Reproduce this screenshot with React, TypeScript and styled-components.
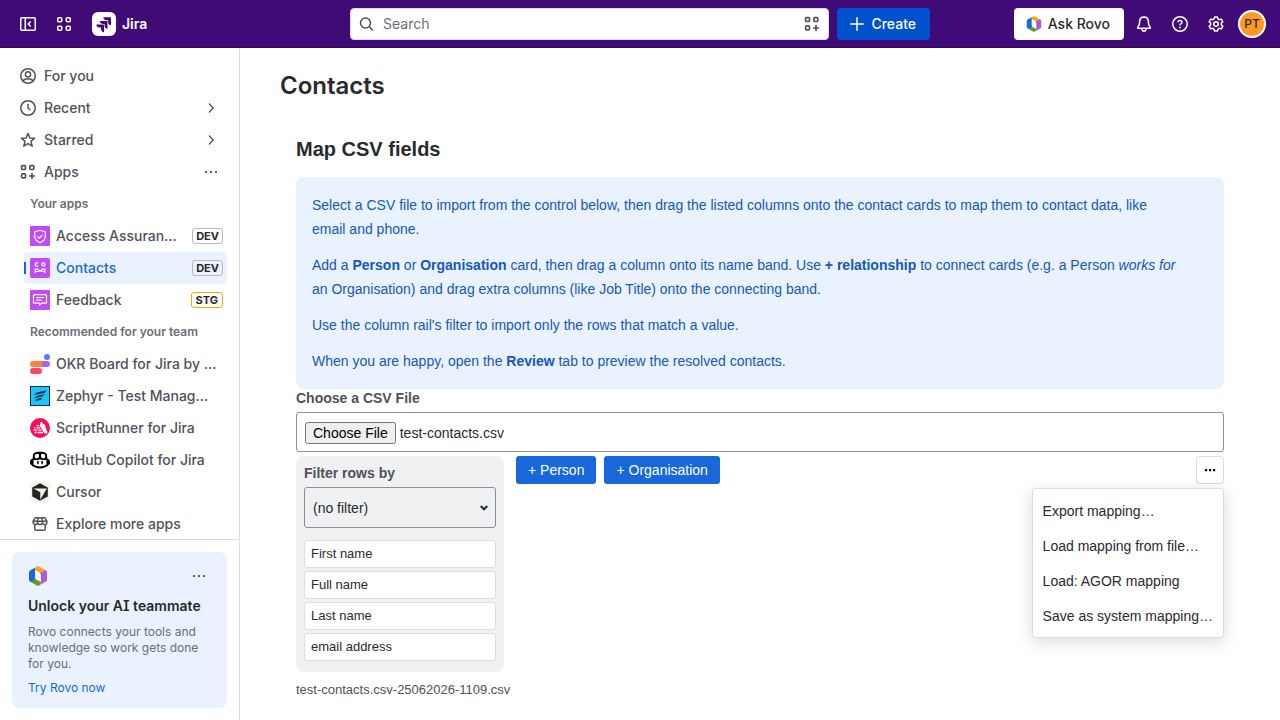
import React, { useEffect, useRef } from "react";
import styled, { createGlobalStyle } from "styled-components";

const ui = `Inter, "Noto Sans", sans-serif`;
const frame = `"Liberation Sans", Arial, sans-serif`;

const GlobalStyle = createGlobalStyle`
  *, *::before, *::after { box-sizing: border-box; }
  body { margin: 0; background: #fff; color: #292a2e; font: 400 14px/20px ${ui}; }
  h1, h2, h3, p, ul { margin: 0; padding: 0; }
  ul { list-style: none; }
  a { color: inherit; text-decoration: none; }
  button, input, select { font: inherit; color: inherit; margin: 0; }
  button { border: 0; padding: 0; background: none; cursor: pointer; }
  svg { display: block; flex: none; }
`;

const Page = styled.div`
  display: flex;
  flex-direction: column;
  height: 100vh;
`;

const Header = styled.header`
  display: grid;
  grid-template-columns: 1fr minmax(320px, 580px) 1fr;
  align-items: center;
  height: 48px;
  flex: none;
  padding: 0 12px;
  background: #400b76;
  border-bottom: 1px solid #35075f;
  color: #fff;
`;

const HeaderGroup = styled.div<{ $end?: boolean }>`
  display: flex;
  align-items: center;
  gap: 4px;
  justify-content: ${(p) => (p.$end ? "flex-end" : "flex-start")};
`;

const IconButton = styled.button`
  display: grid;
  place-items: center;
  width: 32px;
  height: 32px;
  border-radius: 4px;
`;

const Brand = styled.a`
  display: flex;
  align-items: center;
  gap: 6px;
  padding-left: 8px;
  font-weight: 600;
`;

const SearchGroup = styled.div`
  display: flex;
  gap: 8px;
`;

const SearchBox = styled.label`
  display: flex;
  align-items: center;
  flex: 1;
  min-width: 0;
  height: 32px;
  padding: 0 8px;
  gap: 8px;
  background: #fff;
  border: 1px solid #dddee1;
  border-radius: 4px;
  color: #505258;
`;

const SearchInput = styled.input`
  flex: 1;
  min-width: 0;
  border: 0;
  padding: 0;
  outline: 0;
  background: transparent;
  &::placeholder { color: #6b6e76; opacity: 1; }
`;

const CreateButton = styled.button`
  display: flex;
  align-items: center;
  gap: 6px;
  height: 32px;
  padding: 0 14px 0 12px;
  border-radius: 4px;
  background: #0052cc;
  color: #fff;
  font-weight: 500;
`;

const RovoButton = styled(CreateButton)`
  background: #fff;
  color: #292a2e;
`;

const Avatar = styled.span`
  display: grid;
  place-items: center;
  width: 28px;
  height: 28px;
  border: 2px solid #fff;
  border-radius: 50%;
  background: #ff991f;
  color: #292a2e;
  font-size: 12px;
  font-weight: 500;
`;

const Body = styled.div`
  display: flex;
  flex: 1;
  min-height: 0;
`;

const Sidebar = styled.aside`
  display: flex;
  flex-direction: column;
  flex: none;
  width: 240px;
  border-right: 1px solid #dddee1;
`;

const Nav = styled.nav`
  flex: 1;
  min-height: 0;
  overflow: hidden;
  padding: 12px;
`;

const AppList = styled.div`
  padding-left: 12px;
`;

const NavLink = styled.a<{ $nested?: boolean; $active?: boolean }>`
  position: relative;
  display: flex;
  align-items: center;
  gap: ${(p) => (p.$nested ? 6 : 8)}px;
  height: 32px;
  padding: 0 ${(p) => (p.$nested ? "4px 0 6px" : "8px")};
  border-radius: 4px;
  font-weight: 500;
  color: ${(p) => (p.$active ? "#1868db" : "#505258")};
  background: ${(p) => (p.$active ? "#e9f2fe" : "transparent")};
  &::before {
    content: "";
    display: ${(p) => (p.$active ? "block" : "none")};
    position: absolute;
    left: 0;
    top: 10px;
    width: 2px;
    height: 12px;
    background: #1868db;
  }
`;

const NavText = styled.span`
  flex: 1;
  min-width: 0;
  overflow: hidden;
  text-overflow: ellipsis;
  white-space: nowrap;
`;

const NavHeading = styled.h3`
  padding: 0 6px;
  font-size: 12px;
  line-height: 32px;
  font-weight: 600;
  color: #6b6e76;
`;

const Tag = styled.span<{ $amber?: boolean }>`
  margin-left: 4px;
  padding: 0 ${(p) => (p.$amber ? 4 : 3)}px;
  border: 1px solid ${(p) => (p.$amber ? "#fca700" : "#b7b9be")};
  border-radius: 3px;
  background: ${(p) => (p.$amber ? "#fff" : "transparent")};
  color: #292a2e;
  font-size: 11px;
  line-height: 14px;
  font-weight: 700;
`;

const SidebarFooter = styled.div`
  padding: 12px;
  border-top: 1px solid #dddee1;
`;

const Promo = styled.section`
  padding: 12px 16px;
  border-radius: 8px;
  background: #e9f2fe;
  font-size: 12px;
  line-height: 16px;
  color: #6b6e76;
`;

const PromoTop = styled.div`
  display: flex;
  align-items: center;
  justify-content: space-between;
  height: 24px;
`;

const PromoTitle = styled.h3`
  margin: 8px 0;
  font-size: 14px;
  line-height: 20px;
  font-weight: 600;
  font-feature-settings: "cv08";
  white-space: nowrap;
  color: #292a2e;
`;

const PromoLink = styled.a`
  display: block;
  margin-top: 8px;
  color: #1868db;
`;

const MoreButton = styled.button`
  display: grid;
  place-items: center;
  width: 24px;
  height: 24px;
  color: #505258;
`;

const Main = styled.main`
  flex: 1;
  min-width: 0;
  padding: 24px 40px 0;
`;

const PageTitle = styled.h1`
  font-size: 24px;
  line-height: 28px;
  font-weight: 600;
`;

const Frame = styled.section`
  margin-top: 37px;
  padding: 0 16px;
  font-family: ${frame};
`;

const FrameTitle = styled.h2`
  font-size: 20px;
  line-height: 24px;
  font-weight: 700;
`;

const Help = styled.div`
  display: grid;
  gap: 12px;
  margin-top: 16px;
  padding: 16px;
  border-radius: 8px;
  background: #e9f2fe;
  color: #1558bc;
  font-size: 14px;
  line-height: 24px;
  & > p { max-width: 868px; }
`;

const FieldLabel = styled.label`
  display: block;
  font-size: 14px;
  line-height: 19px;
  font-weight: 700;
  color: #505258;
`;

const FileInput = styled.input`
  display: block;
  width: 100%;
  height: 40px;
  margin-top: 4px;
  padding: 9px 8px 7px;
  border: 1px solid #8c8f97;
  border-radius: 3px;
  font-size: 14px;
`;

const Workspace = styled.div`
  display: flex;
  align-items: flex-start;
  gap: 12px;
  margin-top: 4px;
`;

const Rail = styled.div`
  flex: none;
  width: 208px;
  padding: 8px 8px 11px;
  border-radius: 8px;
  background: #f0f1f2;
`;

const SelectWrap = styled.div`
  display: grid;
  align-items: center;
  margin: 4px 0 12px;
  & > * { grid-area: 1 / 1; }
  & > svg { justify-self: end; margin-right: 8px; pointer-events: none; }
`;

const Select = styled.select`
  appearance: none;
  width: 100%;
  height: 41px;
  padding: 0 8px;
  border: 1px solid #8c8f97;
  border-radius: 3px;
  background: #f0f1f2;
  font-size: 14px;
`;

const ColumnList = styled.ul`
  display: grid;
  gap: 3px;
`;

const ColumnItem = styled.li`
  height: 28px;
  padding: 0 6px;
  border: 1px solid #dddee1;
  border-radius: 3px;
  background: #fff;
  font-size: 13px;
  line-height: 26px;
  cursor: grab;
`;

const Toolbar = styled.div`
  display: flex;
  flex: 1;
  gap: 8px;
`;

const AddButton = styled.button`
  height: 28px;
  padding: 0 12px;
  border-radius: 3px;
  background: #1868db;
  color: #fff;
  font-size: 14px;
`;

const MenuAnchor = styled.div`
  position: relative;
  margin-left: auto;
`;

const MenuButton = styled.button`
  display: grid;
  place-items: center;
  width: 28px;
  height: 28px;
  border: 1px solid #dddee1;
  border-radius: 3px;
  color: #000;
`;

const Menu = styled.div`
  position: absolute;
  top: 100%;
  right: 0;
  display: grid;
  margin-top: 4px;
  padding: 4px 0;
  border: 1px solid #dddee1;
  border-radius: 3px;
  background: #fff;
  box-shadow: 0 4px 16px rgba(0, 0, 0, 0.15);
`;

const MenuItem = styled.button`
  height: 35px;
  padding: 0 10px;
  font-size: 14px;
  text-align: left;
  white-space: nowrap;
`;

const FileName = styled.p`
  margin-top: 8px;
  font-size: 13px;
  line-height: 20px;
  color: #505258;
`;

type IconProps = { children: React.ReactNode; size?: number; box?: string };

const Icon = ({ children, size = 16, box = "0 0 16 16" }: IconProps) => (
  <svg width={size} height={size} viewBox={box} fill="none" stroke="currentColor" strokeWidth="1.5" aria-hidden="true">
    {children}
  </svg>
);

const AppsGlyph = () => (
  <Icon>
    <g strokeWidth="1.7">
      <rect x="1.6" y="1.6" width="3.900" height="3.900" rx="1" />
      <rect x="9.900" y="1.6" width="3.900" height="3.900" rx="1" />
      <rect x="1.6" y="9.900" width="3.900" height="3.900" rx="1" />
      <path d="M12 9V15M9 12H15" />
    </g>
  </Icon>
);

const MoreGlyph = () => (
  <Icon>
    <g fill="currentColor" stroke="none">
      <rect x="2" y="7" width="2" height="2" rx=".5" />
      <rect x="7" y="7" width="2" height="2" rx=".5" />
      <rect x="12" y="7" width="2" height="2" rx=".5" />
    </g>
  </Icon>
);

const Chevron = () => (
  <Icon>
    <path d="M6 3.500 10.200 8 6 12.500" strokeWidth="1.300" />
  </Icon>
);

const RovoLogo = ({ size }: { size: number }) => (
  <svg width={size} height={size} viewBox="0 0 20 20" aria-hidden="true">
    <path d="M1 6.200Q1 5 2 4.400L7.300 1.500V11.500Q7.300 13 8.200 14L4.200 16.600 2 15.500Q1 14.900 1 13.800Z" fill="#1868db" />
    <path d="M16.800 3.800 18 4.500Q19 5.100 19 6.300V13.800Q19 15 18 15.600L12.700 18.500V10Q12.700 7.500 11.200 6L14 6Z" fill="#af59e1" />
    <path d="M7.300 3.500 11.500 6Q12.700 7.500 12.700 9.500V16.500L8.500 14.200Q7.300 13 7.300 11.500Z" fill="#fff" />
    <path d="M7.300 1.500 8.800.600Q10 0 11.200.600L16.800 3.800Q15 6.400 12.800 6.400 11.200 6.400 7.300 4.200Z" fill="#fca700" />
    <path d="M3.200 16.200Q5 13.600 7.200 13.600 8.800 13.600 12.700 15.800V18.500L11.200 19.400Q10 20 8.800 19.400Z" fill="#6a9a23" />
  </svg>
);

const Tile = ({ children, fill, rx = 1 }: { children: React.ReactNode; fill: string; rx?: number }) => (
  <svg width="20" height="20" viewBox="0 0 20 20" fill="none" aria-hidden="true">
    <rect width="20" height="20" rx={rx} fill={fill} />
    {children}
  </svg>
);

const icons = {
  person: (
    <Icon>
      <circle cx="8" cy="8" r="7.250" />
      <circle cx="8" cy="6.300" r="2.600" />
      <path d="M3.200 13.200Q3.800 10.900 6 10.900H10Q12.200 10.900 12.800 13.200" />
    </Icon>
  ),
  clock: (
    <Icon>
      <circle cx="8" cy="8" r="7.250" />
      <path d="M8 4V8L10.300 10.300" />
    </Icon>
  ),
  star: (
    <Icon>
      <path d="M8 1.500 9.900 6 14.600 6.300 11 9.400 12.200 14.200 8 11.600 3.800 14.200 5 9.400 1.400 6.300 6.100 6Z" strokeLinejoin="round" />
    </Icon>
  ),
  shield: (
    <Tile fill="#bf4bf5">
      <path d="M10 4.200 15.300 6V10.200Q15.300 14.500 10 16.800 4.700 14.500 4.700 10.200V6Z" stroke="#fff" strokeWidth="1.200" strokeLinejoin="round" />
      <path d="M7.600 10.500 9.300 12.200 12.500 8.800" stroke="#fff" strokeWidth="1.200" />
    </Tile>
  ),
  contacts: (
    <Tile fill="#bf4bf5" rx={2}>
      <g stroke="#fff" strokeWidth="1.200">
        <path d="M8.200 5.200A1.700 1.700 0 1 0 8.200 7.600" />
        <circle cx="13.400" cy="6.400" r="1.600" />
        <path d="M5.200 15V11.200H7.300L10 13.300 12.800 11.200H14.900V15M8.700 13.500H5.500M11.400 13.500H14.800" />
      </g>
    </Tile>
  ),
  feedback: (
    <Tile fill="#bf4bf5">
      <g stroke="#fff" strokeWidth="1.200" strokeLinejoin="round">
        <path d="M4.500 4.600H15.500Q16.500 4.600 16.500 5.600V12.200Q16.500 13.200 15.500 13.200H11.600L9.600 15.200V13.200H4.500Q3.500 13.200 3.500 12.200V5.600Q3.500 4.600 4.500 4.600Z" />
        <path d="M6 7.500H14M6 10.200H11.700" />
      </g>
    </Tile>
  ),
  okr: (
    <svg width="20" height="20" viewBox="0 0 20 20" aria-hidden="true">
      <circle cx="17" cy="3" r="3" fill="#577df5" />
      <rect x="7" y="7" width="13" height="6" rx="3" fill="#a962f5" />
      <path d="M3 7H12.500L11.500 13H3A3 3 0 0 1 3 7Z" fill="#fd8043" />
      <rect y="14" width="12" height="6" rx="3" fill="#fc4664" />
    </svg>
  ),
  zephyr: (
    <Tile fill="#15304c" rx={0}>
      <rect x="1" y="1" width="18" height="18" fill="#19c6fb" />
      <path d="M16.500 4Q15.500 7.500 11.500 7.600L4 9.200Q6.500 5.900 11 5.500 14.500 5.200 16.500 4ZM14.500 7.800Q13.500 10.900 10 11L4 12.400Q6 9.500 9.500 9.200 13 9 14.500 7.800ZM12.500 11.400Q11.500 14 8.800 14.300L4.500 15.500Q6 13 8.500 12.600 11 12.300 12.500 11.400Z" fill="#15304c" />
    </Tile>
  ),
  scriptrunner: (
    <Tile fill="#ff0a5b" rx={10}>
      <path d="M10.300 4.500Q11.300 2.900 12.300 4.300 12.500 6.300 14.800 6.200L16 11 17.700 14.300 16.500 15.700 14.500 15.300 10 8.600Z" fill="#fff" />
      <path d="M6.500 7.600H9.300M4 9.900H5.500M6.500 9.900H10M3.400 12.200H7.300M8.300 12.200H11.500M4.600 14.500H6.500M7.500 14.500H13" stroke="#fff" strokeWidth="1.300" />
    </Tile>
  ),
  copilot: (
    <svg width="20" height="20" viewBox="0 0 20 20" aria-hidden="true">
      <path d="M10 1.800Q16.900 1.400 17.200 5.600V8.200Q20 9.900 20 11.200V13.700Q16 18.400 10 18.400T0 13.700V11.200Q0 9.900 2.800 8.200V5.600Q3.100 1.400 10 1.800Z" fill="#000" />
      <path d="M4.700 6Q4.800 3.800 7.500 3.800 9.200 3.800 9.100 5.500 9 8.300 6.700 8.400 4.500 8.500 4.700 6ZM15.300 6Q15.200 3.800 12.500 3.800 10.800 3.800 10.900 5.500 11 8.300 13.300 8.400 15.500 8.500 15.300 6ZM3.600 10H8.500L10 9 11.500 10H16.400V14.800Q10 18 3.600 14.800Z" fill="#fff" />
      <path d="M7.900 11.600V13.600M12.100 11.600V13.600" stroke="#000" strokeWidth="1.500" strokeLinecap="round" />
    </svg>
  ),
  cursor: (
    <Tile fill="#f4f3ee" rx={0}>
      <path d="M10 1.200 17.800 5.600V14.400L10 18.800 2.200 14.400V5.600Z" fill="#26251f" />
      <path d="M3.500 6.500H16.800L10.300 17.700V10.300Z" fill="#f4f3ee" />
    </Tile>
  ),
  store: (
    <Icon size={20} box="-2 -2 20 20">
      <path d="M3.200 1.750H12.800L14.900 5.200V6.200A2.200 2.200 0 0 1 10.400 6.200 2.300 2.300 0 0 1 5.600 6.200 2.200 2.200 0 0 1 1.100 6.200V5.200ZM1.500 5.200H14.500M5.600 6.200V4.700L6.200 2M10.400 6.200V4.700L9.800 2M2.750 8.500V13Q2.750 14.250 4 14.250H12Q13.250 14.250 13.250 13V8.500" strokeWidth="1.500" />
    </Icon>
  ),
};

const yourApps = [
  { name: "Access Assuran…", icon: icons.shield, tag: "DEV" },
  { name: "Contacts", icon: icons.contacts, tag: "DEV", active: true },
  { name: "Feedback", icon: icons.feedback, tag: "STG" },
];

const recommended = [
  { name: "OKR Board for Jira by …", icon: icons.okr },
  { name: "Zephyr - Test Manag…", icon: icons.zephyr },
  { name: "ScriptRunner for Jira", icon: icons.scriptrunner },
  { name: "GitHub Copilot for Jira", icon: icons.copilot },
  { name: "Cursor", icon: icons.cursor },
  { name: "Explore more apps", icon: icons.store },
];

const columns = ["First name", "Full name", "Last name", "email address"];
const menuItems = ["Export mapping…", "Load mapping from file…", "Load: AGOR mapping", "Save as system mapping…"];

const TopBar = () => (
  <Header>
    <HeaderGroup>
      <IconButton aria-label="Collapse sidebar">
        <Icon>
          <rect x=".75" y="1.75" width="14.500" height="12.500" rx="1.250" />
          <path d="M5.250 2V14M10.600 5.500 8.200 8 10.600 10.500" />
        </Icon>
      </IconButton>
      <IconButton aria-label="Switch sites or apps">
        <Icon>
          <rect x="1.75" y="1.75" width="4" height="4" rx="1" />
          <rect x="10.250" y="1.75" width="4" height="4" rx="1" />
          <rect x="1.75" y="10.250" width="4" height="4" rx="1" />
          <rect x="10.250" y="10.250" width="4" height="4" rx="1" />
        </Icon>
      </IconButton>
      <Brand href="#">
        <svg width="24" height="24" viewBox="0 0 24 24" aria-hidden="true">
          <rect width="24" height="24" rx="6" fill="#fff" />
          <path
            fill="#400b76"
            d="M9.051 15.434H7.734c-1.988 0-3.413-1.218-3.413-3h7.085c.367 0 .605.26.605.63v7.130c-1.772 0-2.960-1.435-2.960-3.434zm3.500-3.543h-1.318c-1.987 0-3.413-1.196-3.413-2.978h7.085c.367 0 .627.239.627.608v7.130c-1.772 0-2.981-1.435-2.981-3.434zm3.520-3.522h-1.317c-1.987 0-3.413-1.217-3.413-3h7.085c.367 0 .605.261.605.630v7.130c-1.772 0-2.960-1.435-2.960-3.434z"
          />
        </svg>
        Jira
      </Brand>
    </HeaderGroup>
    <SearchGroup>
      <SearchBox>
        <Icon>
          <circle cx="6.500" cy="7" r="5" />
          <path d="M10.200 10.700 14 14.500" />
        </Icon>
        <SearchInput type="search" placeholder="Search" aria-label="Search" />
        <AppsGlyph />
      </SearchBox>
      <CreateButton>
        <Icon>
          <path d="M8 1.200V14.800M1.200 8H14.800" />
        </Icon>
        Create
      </CreateButton>
    </SearchGroup>
    <HeaderGroup $end>
      <RovoButton>
        <RovoLogo size={16} />
        Ask Rovo
      </RovoButton>
      <IconButton aria-label="Notifications">
        <Icon>
          <path d="M8 .9Q12.100 1 12.300 5.200L12.700 8.700 14.300 11.500V12.200H1.700V11.500L3.300 8.700 3.700 5.200Q3.900 1 8 .9Z" strokeLinejoin="round" />
          <path d="M5.700 12.500Q6 15.200 8 15.200T10.300 12.500" />
        </Icon>
      </IconButton>
      <IconButton aria-label="Help">
        <Icon>
          <circle cx="8" cy="8" r="7.250" />
          <path d="M6 6.300Q6 4.500 8 4.500T10 6.200Q10 7.200 8.800 7.800 8 8.200 8 9.300" />
          <circle cx="8" cy="11.400" r=".9" fill="currentColor" stroke="none" />
        </Icon>
      </IconButton>
      <IconButton aria-label="Settings">
        <Icon>
          <path d="M6.600.9H9.400L9.900 2.900 11.200 3.700 13.200 3.100 14.800 5.600 13.300 7.100V8.900L14.800 10.400 13.200 12.900 11.200 12.300 9.900 13.100 9.400 15.100H6.600L6.100 13.100 4.800 12.300 2.800 12.900 1.200 10.400 2.700 8.900V7.100L1.200 5.600 2.800 3.100 4.800 3.700 6.100 2.900Z" strokeLinejoin="round" />
          <circle cx="8" cy="8" r="2.250" />
        </Icon>
      </IconButton>
      <IconButton aria-label="Your profile">
        <Avatar>PT</Avatar>
      </IconButton>
    </HeaderGroup>
  </Header>
);

function NavSection({ title, children }: { title: string; children: React.ReactNode }) {
  return (
    <AppList>
      <NavHeading>{title}</NavHeading>
      <ul>{children}</ul>
    </AppList>
  );
}

const SideNav = () => (
  <Sidebar>
    <Nav>
      <NavLink href="#">{icons.person}<NavText>For you</NavText></NavLink>
      <NavLink href="#">{icons.clock}<NavText>Recent</NavText><Chevron /></NavLink>
      <NavLink href="#">{icons.star}<NavText>Starred</NavText><Chevron /></NavLink>
      <NavLink href="#"><AppsGlyph /><NavText>Apps</NavText><MoreGlyph /></NavLink>
      <NavSection title="Your apps">
        {yourApps.map((a) => (
          <li key={a.name}>
            <NavLink href="#" $nested $active={a.active}>
              {a.icon}
              <NavText>{a.name}</NavText>
              <Tag $amber={a.tag === "STG"}>{a.tag}</Tag>
            </NavLink>
          </li>
        ))}
      </NavSection>
      <NavSection title="Recommended for your team">
        {recommended.map((a) => (
          <li key={a.name}>
            <NavLink href="#" $nested>
              {a.icon}
              <NavText>{a.name}</NavText>
            </NavLink>
          </li>
        ))}
      </NavSection>
    </Nav>
    <SidebarFooter>
      <Promo>
        <PromoTop>
          <RovoLogo size={20} />
          <MoreButton aria-label="More"><MoreGlyph /></MoreButton>
        </PromoTop>
        <PromoTitle>Unlock your AI teammate</PromoTitle>
        <p>Rovo connects your tools and knowledge so work gets done for you.</p>
        <PromoLink href="#">Try Rovo now</PromoLink>
      </Promo>
    </SidebarFooter>
  </Sidebar>
);

export default function App() {
  const file = useRef<HTMLInputElement>(null);

  useEffect(() => {
    const transfer = new DataTransfer();
    transfer.items.add(new File(["First name,Full name,Last name,email address"], "test-contacts.csv", { type: "text/csv" }));
    if (file.current) file.current.files = transfer.files;
  }, []);

  return (
    <Page>
      <GlobalStyle />
      <TopBar />
      <Body>
        <SideNav />
        <Main>
          <PageTitle>Contacts</PageTitle>
          <Frame>
            <FrameTitle>Map CSV fields</FrameTitle>
            <Help>
              <p>
                Select a CSV file to import from the control below, then drag the listed columns onto the contact cards
                to map them to contact data, like email and phone.
              </p>
              <p>
                Add a <b>Person</b> or <b>Organisation</b> card, then drag a column onto its name band. Use{" "}
                <b>+ relationship</b> to connect cards (e.g. a Person <i>works for</i> an Organisation) and drag extra
                columns (like Job Title) onto the connecting band.
              </p>
              <p>Use the column rail's filter to import only the rows that match a value.</p>
              <p>
                When you are happy, open the <b>Review</b> tab to preview the resolved contacts.
              </p>
            </Help>
            <FieldLabel htmlFor="csv">Choose a CSV File</FieldLabel>
            <FileInput id="csv" ref={file} type="file" accept=".csv" />
            <Workspace>
              <Rail>
                <FieldLabel htmlFor="filter">Filter rows by</FieldLabel>
                <SelectWrap>
                  <Select id="filter" defaultValue="">
                    <option value="">(no filter)</option>
                    {columns.map((c) => <option key={c}>{c}</option>)}
                  </Select>
                  <svg width="8" height="6" viewBox="0 0 8 6" fill="none" stroke="#1c2b41" strokeWidth="2" aria-hidden="true">
                    <path d="M.7 1 4 4.300 7.300 1" />
                  </svg>
                </SelectWrap>
                <ColumnList>
                  {columns.map((c) => <ColumnItem key={c} draggable>{c}</ColumnItem>)}
                </ColumnList>
              </Rail>
              <Toolbar>
                <AddButton>+ Person</AddButton>
                <AddButton>+ Organisation</AddButton>
                <MenuAnchor>
                  <MenuButton aria-label="Mapping actions" aria-expanded="true">
                    <svg width="12" height="12" viewBox="0 0 12 12" aria-hidden="true">
                      <path d="M1 5H3.200V7.200H1ZM5 5H7.200V7.200H5ZM9 5H11.200V7.200H9Z" />
                    </svg>
                  </MenuButton>
                  <Menu role="menu">
                    {menuItems.map((m) => <MenuItem key={m} role="menuitem">{m}</MenuItem>)}
                  </Menu>
                </MenuAnchor>
              </Toolbar>
            </Workspace>
            <FileName>test-contacts.csv-25062026-1109.csv</FileName>
          </Frame>
        </Main>
      </Body>
    </Page>
  );
}
